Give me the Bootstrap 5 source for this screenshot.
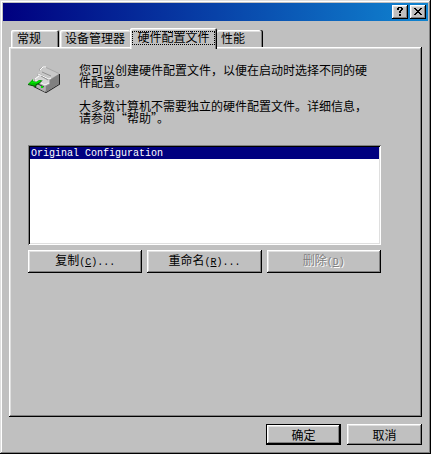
<!DOCTYPE html>
<html lang="zh-CN">
<head>
<meta charset="utf-8">
<meta name="viewport" content="width=device-width, initial-scale=1">
<title>系统属性</title>
<link href="https://cdn.jsdelivr.net/npm/bootstrap@5.3.0/dist/css/bootstrap.min.css" rel="stylesheet">
<style>
body, button, select { font-family: "Noto Sans CJK SC", sans-serif; }
body { background: #c0c0c0; color: #000; font-size: 12px; line-height: 12px; }
.window { padding: 3px 3px 9px; box-shadow: inset -1px -1px #000, inset 1px 1px #dfdfdf, inset -2px -2px #808080, inset 2px 2px #fff; }
.titlebar { height: 18px; padding: 0 2px; gap: 2px; background: linear-gradient(90deg, #000080, #1084d0); }
.bevel { border: 0; border-radius: 0; background: #c0c0c0; color: #000; box-shadow: inset -1px -1px #000, inset 1px 1px #fff, inset -2px -2px #808080, inset 2px 2px #dfdfdf; }
.push { height: 23px; padding: 0; font-size: 12px; line-height: 12px; white-space: nowrap; }
.push:disabled { color: #808080; opacity: 1; background: #c0c0c0; border: 0; text-shadow: 1px 1px #fff; box-shadow: inset -1px -1px #000, inset 1px 1px #fff, inset -2px -2px #808080, inset 2px 2px #dfdfdf; }
.dialog-push { width: 75px; height: 21px; }
.default-push { box-shadow: inset 0 0 0 1px #000, inset -2px -2px #000, inset 2px 2px #fff, inset -3px -3px #808080, inset 3px 3px #dfdfdf; }
.caption-button { width: 16px; height: 14px; padding: 0; line-height: 0; }
.tabs { margin: 7px 6px 0; padding-left: 2px; height: 19px; }
.tab { height: 17px; padding: 0 6px 2px; border: 0; background: #c0c0c0; color: #000; font-size: 12px; line-height: 12px; text-align: left; border-radius: 2px 2px 0 0; box-shadow: inset 1px 1px #fff, inset -1px 0 #000, inset -2px 0 #808080, inset 2px 2px #dfdfdf; white-space: nowrap; }
.tab-general { width: 48px; margin-right: 1px; }
.tab-devices { width: 70px; padding-left: 5px; box-shadow: inset 1px 1px #fff, inset 2px 2px #dfdfdf; }
.tab-profiles { width: 87px; height: 21px; padding: 3px 2px 4px; align-self: flex-start; z-index: 1; text-align: center; }
.tab-profiles span { display: block; height: 14px; line-height: 12px; outline: 1px dotted #000; outline-offset: -1px; }
.tab-performance { width: 46px; padding-left: 4px; box-shadow: inset -1px 0 #000, inset -2px 0 #808080, inset 0 1px #fff, inset 0 2px #dfdfdf; }
.sheet { margin: 0 6px; padding: 17px 41px 17px 19px; }
.intro { gap: 18px; }
.intro svg { margin-top: 2px; }
.intro p { margin: 0 12px 12px 0; }
.profiles { display: block; width: 100%; height: 100px; padding: 2px; margin: 9px 0 5px; border: 0; border-radius: 0; outline: 0; background: #fff; overflow: hidden; box-shadow: inset 1px 1px #808080, inset -1px -1px #fff, inset 2px 2px #000, inset -2px -2px #dfdfdf; }
.profiles option { height: 12px; min-height: 12px; padding: 1px 1px 0; font: 10px/12px "Liberation Mono", monospace; }
.profiles option:checked { background: linear-gradient(#000080, #000080); color: #fff; -webkit-text-fill-color: #fff; }
.actions { display: grid; grid-template-columns: repeat(3, 1fr); gap: 5px; }
.latin { font-family: "Liberation Mono", monospace; font-size: 10px; }
.footer { padding: 7px 6px 0; gap: 6px; }
</style>
<script src="https://cdn.jsdelivr.net/npm/bootstrap@5.3.0/dist/js/bootstrap.bundle.min.js"></script>
</head>
<body>
<main class="window d-flex flex-column min-vh-100">
  <header class="titlebar d-flex align-items-center justify-content-end">
    <button type="button" class="bevel caption-button" aria-label="帮助">
      <svg width="16" height="14" shape-rendering="crispEdges" aria-hidden="true"><path d="M5 3h1v-1h4v1h1v2h-1v1h-1v2h-2v-2h1v-1h1v-2h-2v2h-2zM7 9h2v2h-2z"/></svg>
    </button>
    <button type="button" class="bevel caption-button" aria-label="关闭">
      <svg width="16" height="14" shape-rendering="crispEdges" aria-hidden="true"><path d="M4 3h2v1h1v1h2v-1h1v-1h2v1h-1v1h-1v1h-1v1h1v1h1v1h1v1h-2v-1h-1v-1h-2v1h-1v1h-2v-1h1v-1h1v-1h1v-1h-1v-1h-1v-1h-1z"/></svg>
    </button>
  </header>

  <div class="tabs d-flex align-items-end" role="tablist">
    <button type="button" class="tab tab-general" role="tab" aria-selected="false">常规</button>
    <button type="button" class="tab tab-devices" role="tab" aria-selected="false">设备管理器</button>
    <button type="button" class="tab tab-profiles position-relative" role="tab" aria-selected="true" aria-controls="profiles-sheet"><span>硬件配置文件</span></button>
    <button type="button" class="tab tab-performance" role="tab" aria-selected="false">性能</button>
  </div>

  <section class="sheet bevel flex-grow-1" id="profiles-sheet" role="tabpanel">
    <div class="intro d-flex">
      <svg class="flex-shrink-0" width="33" height="27" viewBox="0 0 33 27" aria-hidden="true">
        <path d="M6 20l12 6 13-8V8" fill="none" stroke="#202020" stroke-width="2"/>
        <path d="M11 3l3-2h4l13 6v11l-13 8-12-6v-7l5-4z" fill="#a8a8a8"/>
        <path d="M12 4l3-2h3l13 6-9 5-12-6z" fill="#c8c8c8"/>
        <path d="M10 7l12 6-2 3-11-6z" fill="#a8a8a8"/>
        <path d="M6 13l5-4 10 5v3l-4 2z" fill="#d4d4d4"/>
        <path d="M6 14l11 5v7l-11-6z" fill="#b0b0b0"/>
        <path d="M18 20l4-2v-4l9-6v10l-13 8z" fill="#808080"/>
        <path d="M12 4l3-3h3M10 8l11 5 2-1M7 13l4-3M7 14l10 5 4-2" fill="none" stroke="#fff"/>
        <path d="M14 6l9 4M13 10l7 4" fill="none" stroke="#909090"/>
        <path d="M8 17l8 4" fill="none" stroke="#303030"/>
        <path d="M0 18l5-5v2l3 1 3-2h3l-3 4-3 1v2z" fill="#00c000"/>
        <path d="M0 18.500l8 2v-2l3-1 3-3" fill="none" stroke="#005000"/>
        <path d="M3 17l3-1 2 1 4-2" fill="none" stroke="#00f000"/>
        <path d="M13 20h2v2h-2z" fill="#00e000"/>
      </svg>
      <div>
        <p>您可以创建硬件配置文件，以便在启动时选择不同的硬件配置。</p>
        <p>大多数计算机不需要独立的硬件配置文件。详细信息，请参阅“帮助”。</p>
      </div>
    </div>
    <select class="profiles" size="8" aria-label="硬件配置文件">
      <option selected>Original Configuration</option>
    </select>
    <div class="actions">
      <button type="button" class="btn bevel push">复制<span class="latin">(<u>C</u>)...</span></button>
      <button type="button" class="btn bevel push">重命名<span class="latin">(<u>R</u>)...</span></button>
      <button type="button" class="btn bevel push" disabled>删除<span class="latin">(<u>D</u>)</span></button>
    </div>
  </section>

  <footer class="footer d-flex justify-content-end">
    <button type="button" class="btn bevel push dialog-push default-push">确定</button>
    <button type="button" class="btn bevel push dialog-push">取消</button>
  </footer>
</main>
</body>
</html>
